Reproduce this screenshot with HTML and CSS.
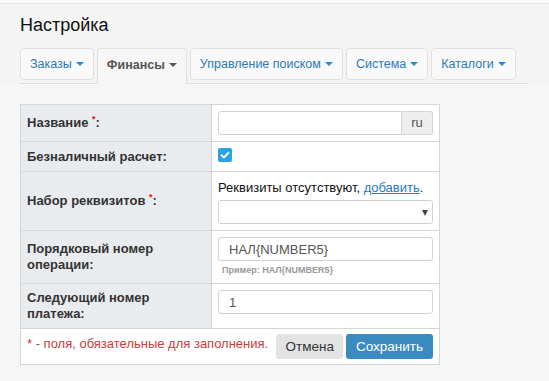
FILE: index.html
```html
<!DOCTYPE html>
<html lang="ru">

<head>
  <meta charset="UTF-8">
  <title>Настройка</title>
  <link rel="stylesheet" href="styles.css">
</head>

<body>
  <div class="page">
    <div class="header">
      <h1>Настройка</h1>
      <ul class="tabs">
        <li class="tab">Заказы <span class="caret"></span></li>
        <li class="tab active">Финансы <span class="caret"></span></li>
        <li class="tab">Управление поиском <span class="caret"></span></li>
        <li class="tab">Система <span class="caret"></span></li>
        <li class="tab">Каталоги <span class="caret"></span></li>
      </ul>
    </div>

    <div class="content">
      <table class="form-table">
        <colgroup>
          <col class="label-col">
          <col>
        </colgroup>
        <tr>
          <th>Название <sup class="req">*</sup>:</th>
          <td>
            <div class="input-group">
              <input type="text" class="field">
              <span class="addon">ru</span>
            </div>
          </td>
        </tr>
        <tr>
          <th>Безналичный расчет:</th>
          <td>
            <svg class="check" width="14" height="14" viewBox="0 0 14 14">
              <rect width="14" height="14" rx="2" fill="#2aa3e2"/>
              <path d="M3.6 7.2 L6 9.4 L10.4 4.9" fill="none" stroke="#fff" stroke-width="2" stroke-linecap="round" stroke-linejoin="round"/>
            </svg>
          </td>
        </tr>
        <tr>
          <th>Набор реквизитов <sup class="req">*</sup>:</th>
          <td>
            <div class="note">Реквизиты отсутствуют, <a href="#">добавить</a>.</div>
            <div class="select-wrap">
              <select class="field"></select>
            </div>
          </td>
        </tr>
        <tr>
          <th>Порядковый номер операции:</th>
          <td>
            <input type="text" class="field" value="НАЛ{NUMBER5}">
            <div class="hint">Пример: НАЛ{NUMBER5}</div>
          </td>
        </tr>
        <tr>
          <th>Следующий номер платежа:</th>
          <td>
            <input type="text" class="field" value="1">
          </td>
        </tr>
        <tr>
          <td colspan="2" class="footer-cell">
            <div class="footer">
              <span class="required-note">* - поля, обязательные для заполнения.</span>
              <div class="buttons">
                <button class="btn">Отмена</button>
                <button class="btn btn-primary">Сохранить</button>
              </div>
            </div>
          </td>
        </tr>
      </table>
    </div>
  </div>
</body>

</html>
```

FILE: styles.css
```css
body {
  margin: 0;
  padding: 3px 0 0 0;
  background-color: #fcfcfc;
  color: #333;
  font-family: "Liberation Sans", Arial, sans-serif;
  font-size: 13px;
}

.page {
  border-top: 1px solid #e4e4e4;
  background-color: #f6f6f6;
  min-height: 377px;
}

.header {
  padding: 10px 20px 0 20px;
  background-color: #f4f4f4;
}

h1 {
  margin: 0 0 12px 0;
  font-size: 18px;
  line-height: 22px;
  font-weight: normal;
  color: #111;
}

.tabs {
  display: flex;
  align-items: flex-start;
  gap: 3px;
  list-style: none;
  margin: 0;
  padding: 0;
  border-bottom: 1px solid #dddddd;
}

.tab {
  box-sizing: border-box;
  flex: none;
  white-space: nowrap;
  height: 32px;
  margin-bottom: 3px;
  padding: 0 9px;
  display: flex;
  align-items: center;
  gap: 4px;
  border: 1px solid #e0e0e0;
  border-radius: 4px;
  background-color: #f9f9f9;
  color: #2a7ab8;
  font-size: 12.5px;
}

.tab.active {
  height: 36px;
  margin-bottom: -1px;
  padding-bottom: 4px;
  border-bottom: none;
  border-radius: 4px 4px 0 0;
  background-color: #f6f6f6;
  color: #555;
  font-weight: bold;
}

.caret {
  width: 0;
  height: 0;
  border-top: 4px solid #2a8ad0;
  border-left: 4px solid transparent;
  border-right: 4px solid transparent;
}

.tab.active .caret {
  border-top-color: #555;
}

.content {
  padding: 20px;
}

.form-table {
  width: 420px;
  table-layout: fixed;
  border-collapse: collapse;
  border: 1px solid #d6d6d6;
  background-color: #fff;
}

.label-col {
  width: 191px;
}

.form-table th,
.form-table td {
  border: 1px solid #d6d6d6;
  padding: 6px;
  line-height: 16px;
  vertical-align: top;
}

.form-table th {
  background-color: #e9ecef;
  text-align: left;
  vertical-align: middle;
  font-weight: bold;
  color: #333;
}

.req {
  color: #e01010;
  font-size: 9px;
  line-height: 0;
}

.field {
  box-sizing: border-box;
  display: block;
  width: 100%;
  height: 24px;
  margin: 0;
  padding: 0 10px;
  border: 1px solid #d2d2d2;
  border-radius: 3px;
  background-color: #fff;
  color: #555;
  font-family: "Liberation Sans", Arial, sans-serif;
  font-size: 13px;
}

.input-group {
  display: flex;
}

.input-group .field {
  border-radius: 3px 0 0 3px;
}

.addon {
  box-sizing: border-box;
  flex: none;
  width: 31px;
  height: 24px;
  line-height: 22px;
  text-align: center;
  border: 1px solid #d2d2d2;
  border-left: none;
  border-radius: 0 3px 3px 0;
  background-color: #eeeeee;
  color: #555;
}

.check {
  display: block;
  margin-bottom: 3px;
}

.note {
  line-height: 18px;
  margin: 1px 0 3px 0;
  color: #111;
}

.note a {
  color: #2a7ab8;
}

.select-wrap {
  position: relative;
}

.select-wrap select {
  appearance: none;
}

.select-wrap::after {
  content: "";
  position: absolute;
  right: 5px;
  top: 10px;
  border-top: 6px solid #444;
  border-left: 3.5px solid transparent;
  border-right: 3.5px solid transparent;
}

.hint {
  padding: 2px 0 0 4px;
  font-size: 9px;
  line-height: 14px;
  font-weight: bold;
  color: #999;
}

.form-table td.footer-cell {
  padding: 5px 6px;
}

.footer {
  display: flex;
  justify-content: space-between;
  align-items: flex-start;
}

.required-note {
  padding-top: 2px;
  white-space: nowrap;
  color: #c9403a;
}

.buttons {
  display: flex;
  gap: 3px;
}

.btn {
  height: 25px;
  padding: 0 9px;
  border: none;
  border-radius: 3px;
  background-color: #e3e3e3;
  color: #333;
  font-family: "Liberation Sans", Arial, sans-serif;
  font-size: 13.5px;
}

.btn-primary {
  padding: 0 10px;
  background-color: #3a8cc0;
  color: #fff;
}
```
